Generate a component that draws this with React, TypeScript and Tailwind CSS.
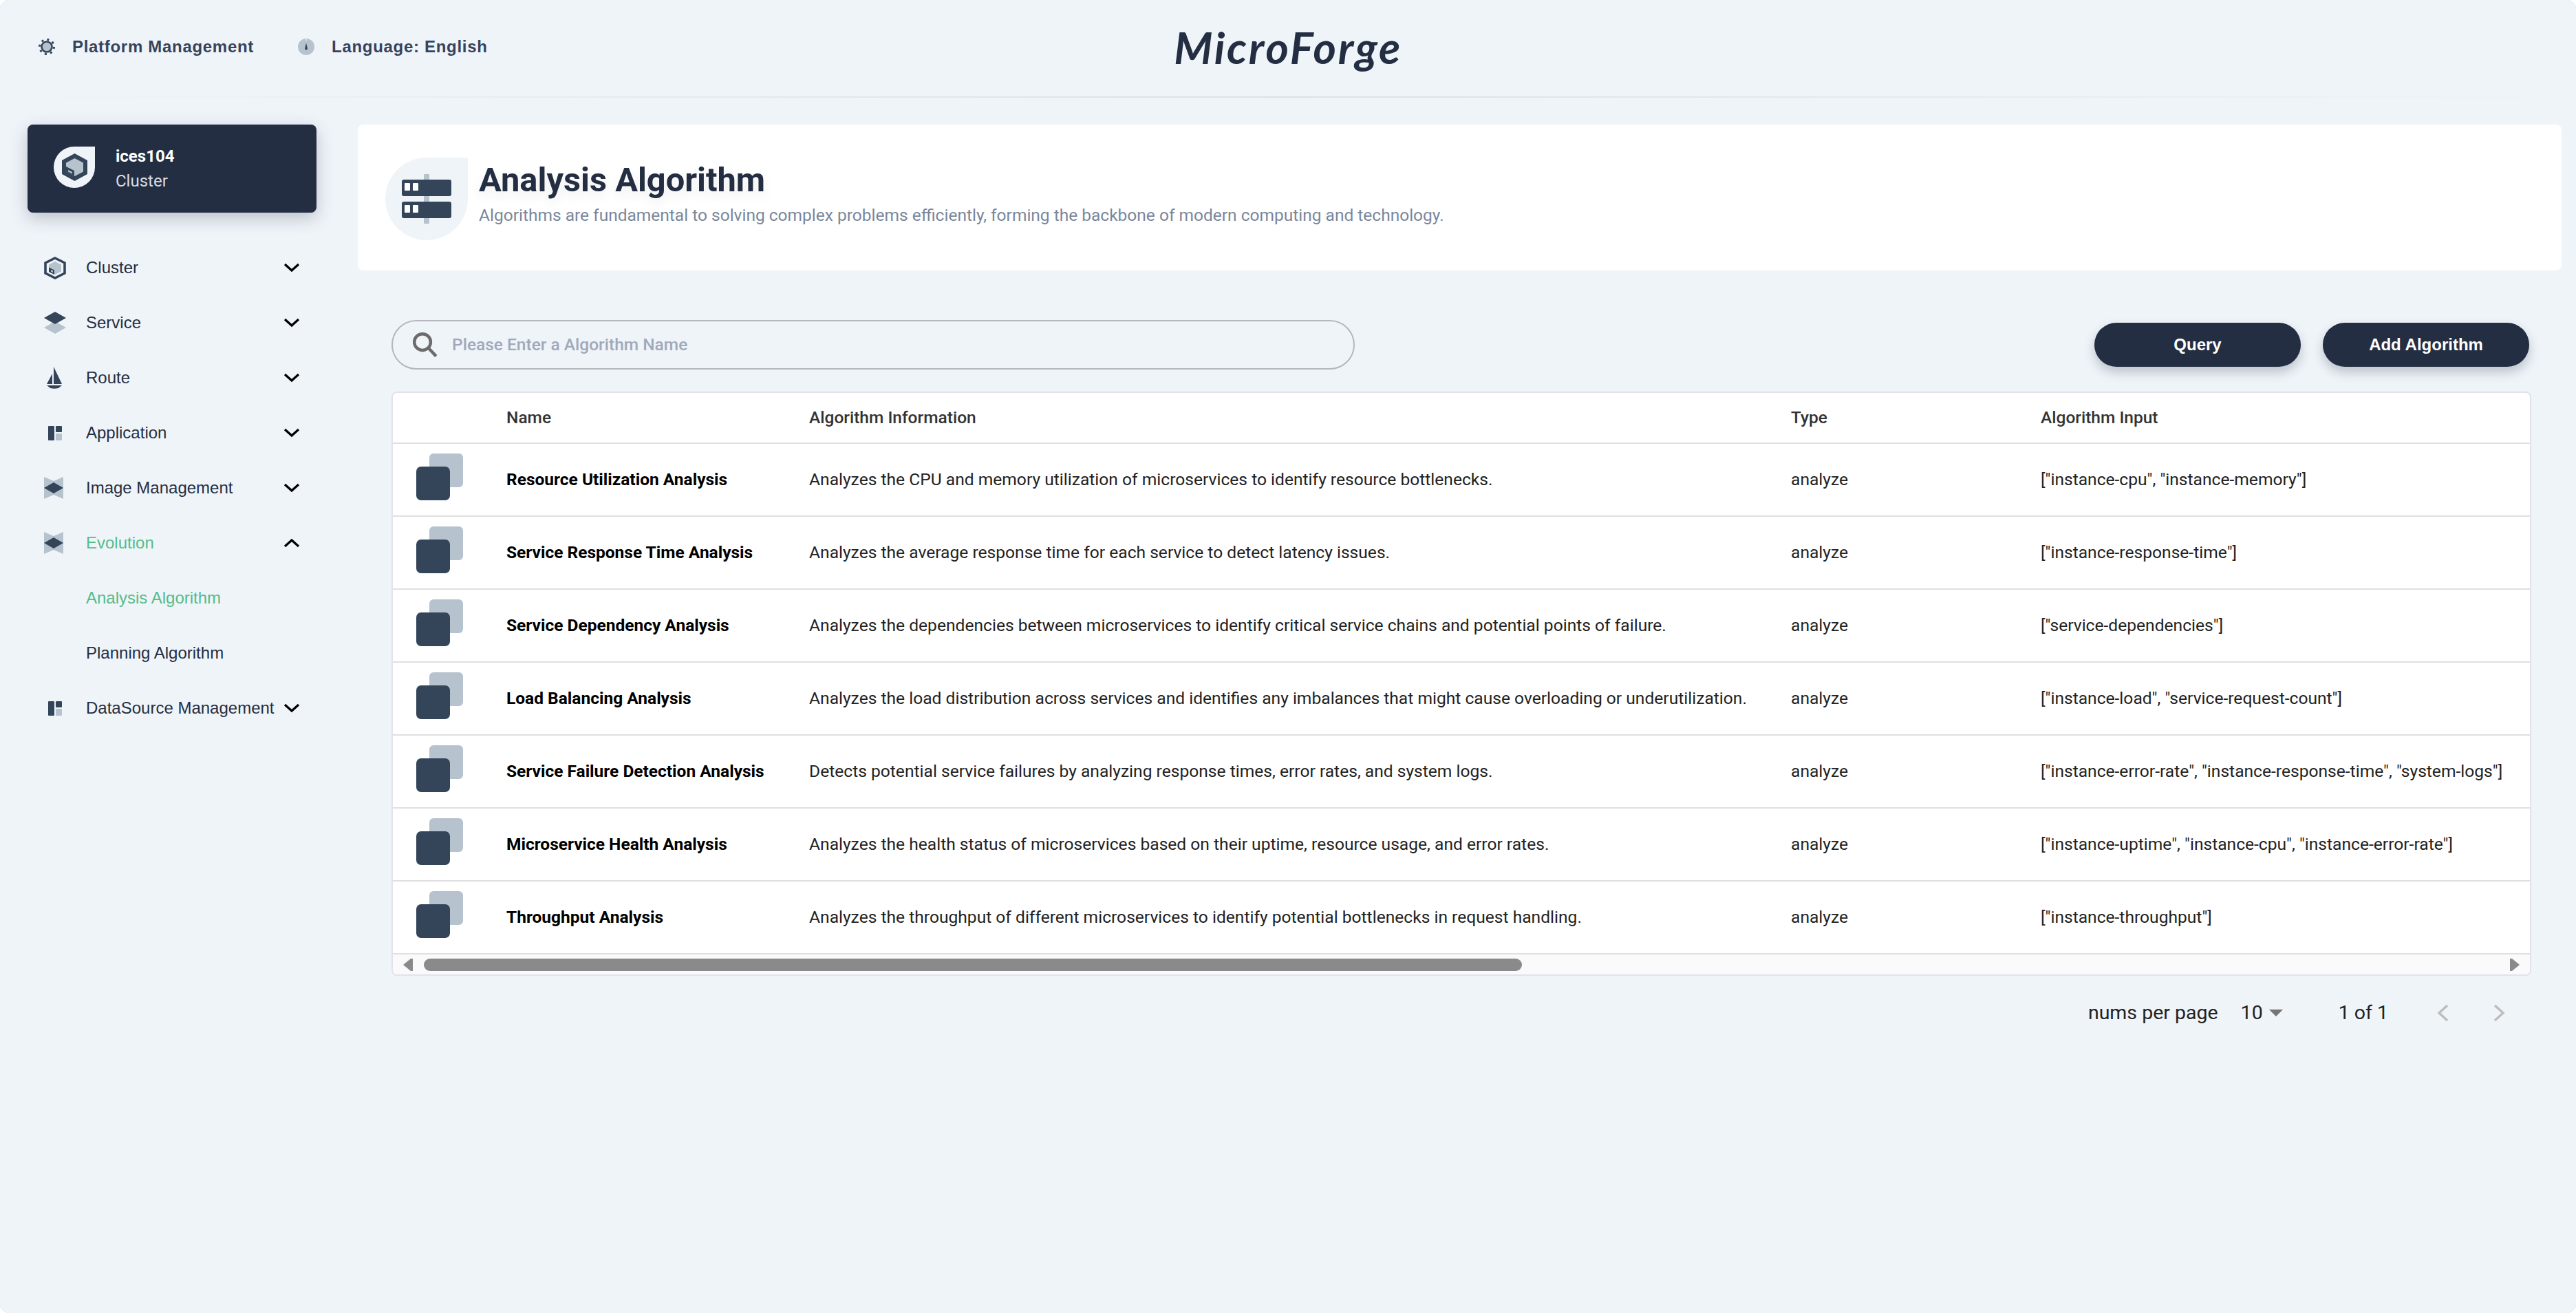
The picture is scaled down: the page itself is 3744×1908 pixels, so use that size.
import React from "react";

const rows = [
  ["Resource Utilization Analysis", "Analyzes the CPU and memory utilization of microservices to identify resource bottlenecks.", '["instance-cpu", "instance-memory"]'],
  ["Service Response Time Analysis", "Analyzes the average response time for each service to detect latency issues.", '["instance-response-time"]'],
  ["Service Dependency Analysis", "Analyzes the dependencies between microservices to identify critical service chains and potential points of failure.", '["service-dependencies"]'],
  ["Load Balancing Analysis", "Analyzes the load distribution across services and identifies any imbalances that might cause overloading or underutilization.", '["instance-load", "service-request-count"]'],
  ["Service Failure Detection Analysis", "Detects potential service failures by analyzing response times, error rates, and system logs.", '["instance-error-rate", "instance-response-time", "system-logs"]'],
  ["Microservice Health Analysis", "Analyzes the health status of microservices based on their uptime, resource usage, and error rates.", '["instance-uptime", "instance-cpu", "instance-error-rate"]'],
  ["Throughput Analysis", "Analyzes the throughput of different microservices to identify potential bottlenecks in request handling.", '["instance-throughput"]'],
];

const D = "#34455a";
const L = "#b6c2cd";

function Gear() {
  return (
    <svg width="24" height="24" viewBox="0 0 24 24">
      <circle cx="12" cy="12" r="10.5" fill="none" stroke={D} strokeWidth="3" strokeDasharray="3 5.25" />
      <circle cx="12" cy="12" r="7.5" fill={L} stroke={D} strokeWidth="2.6" />
    </svg>
  );
}
function Gauge() {
  return (
    <svg width="24" height="24" viewBox="0 0 24 24">
      <circle cx="12" cy="12" r="12" fill={L} />
      <path d="M12 2.2 A9.8 9.8 0 0 1 21.8 12 A9.8 9.8 0 0 0 12 2.2Z" fill="#eff4f9" />
      <path d="M12 0.5v3" stroke="#eff4f9" strokeWidth="1.2" />
      <path d="M12 6.5 L13.8 14 A1.9 1.9 0 1 1 10.2 14Z" fill={D} />
    </svg>
  );
}
function Hex({ w, h }: { w: number; h: number }) {
  return (
    <svg width={w} height={h} viewBox="0 0 32 33">
      <path d="M16 2 L30 9 V24 L16 31 L2 24 V9Z" fill="none" stroke={D} strokeWidth="3.6" strokeLinejoin="miter" />
      <path d="M16 7 L25 11.5 V21.5 L16 26 L7 21.5 V11.5Z" fill={L} />
      <path d="M7 15.5 L15 19.5 V26 L7 22Z" fill={D} />
      <path d="M10 19 L13 20.5 V23 L10 21.5Z" fill={L} />
    </svg>
  );
}
function CardHex() {
  return (
    <svg width="37" height="40" viewBox="0 0 37 40">
      <path d="M18.5 0 L37 10 V30 L18.5 40 L0 30 V10Z" fill={D} />
      <path d="M18.5 7 L31 13.5 V26.5 L18.5 33 L6 26.5 V13.5Z" fill={L} />
      <path d="M6 19 L18 25 V33 L6 26.5Z" fill={D} />
      <path d="M9 24 L15 27 V29.5 L9 26.5Z" fill={L} />
    </svg>
  );
}
function Layers() {
  return (
    <svg width="32" height="32" viewBox="0 0 32 32">
      <path d="M16 14 L32 23 L16 32 L0 23Z" fill={L} />
      <path d="M16 0 L32 9 L16 18 L0 9Z" fill={D} />
    </svg>
  );
}
function Boat() {
  return (
    <svg width="22" height="32" viewBox="0 0 22 32">
      <path d="M10 0 V25 L22 25Z" fill={D} />
      <path d="M8 10 V25 L0 25Z" fill={D} />
      <path d="M0 27 H22 L17 31 Q11 32.5 5 31Z" fill={D} />
    </svg>
  );
}
function Dash() {
  return (
    <svg width="20" height="21" viewBox="0 0 20 21">
      <rect width="9" height="21" rx="1" fill={D} />
      <rect x="11" width="9" height="9" rx="1" fill={D} />
      <rect x="11" y="11" width="9" height="10" rx="1" fill={L} />
    </svg>
  );
}
function Bow() {
  return (
    <svg width="28" height="32" viewBox="0 0 28 32">
      <path d="M0 0 L14 6 L28 0 V32 L14 26 L0 32Z" fill={L} />
      <path d="M14 8 L28 16 L14 24 L0 16Z" fill={D} />
    </svg>
  );
}
function Chevron({ up }: { up?: boolean }) {
  return (
    <svg width="24" height="16" viewBox="0 0 24 16" className="shrink-0">
      <path d={up ? "M2 13 L12 4 L22 13" : "M2 3 L12 12 L22 3"} fill="none" stroke="#000" strokeWidth="3.2" />
    </svg>
  );
}

const nav: { label: string; icon: React.ReactNode; active?: boolean; up?: boolean; sub?: boolean }[] = [
  { label: "Cluster", icon: <Hex w={32} h={33} /> },
  { label: "Service", icon: <Layers /> },
  { label: "Route", icon: <span className="ml-[4px]"><Boat /></span> },
  { label: "Application", icon: <span className="ml-[6px]"><Dash /></span> },
  { label: "Image Management", icon: <Bow /> },
  { label: "Evolution", icon: <Bow />, active: true, up: true },
  { label: "Analysis Algorithm", icon: null, active: true, sub: true },
  { label: "Planning Algorithm", icon: null, sub: true },
  { label: "DataSource Management", icon: <span className="ml-[6px]"><Dash /></span> },
];

export default function App() {
  return (
    <div className="w-[3744px] h-[1908px] overflow-hidden bg-white" style={{ fontFamily: "Roboto, sans-serif" }}>
      <div className="w-full h-full bg-[#eff4f9] rounded-[16px] shadow-[0_0_3px_rgba(0,0,0,0.2)] text-[#242e42]">
        <header className="relative h-[142px] grid grid-cols-[1fr_auto_1fr] items-center">
          <div className="flex items-center pl-[56px] pb-[6px] text-[#36435c] font-bold text-[24px] tracking-[0.7px]" style={{ fontFamily: '"Liberation Sans", sans-serif' }}>
            <Gear />
            <span className="ml-[25px]">Platform Management</span>
            <span className="ml-[64px]"><Gauge /></span>
            <span className="ml-[25px]">Language: English</span>
          </div>
          <div className="text-[64px] italic font-bold tracking-[2.7px] leading-none pb-[4px]" style={{ fontFamily: 'Lato, sans-serif' }}>MicroForge</div>
          <div />
          <div className="absolute left-0 right-0 bottom-0 h-[2px] bg-gradient-to-r from-[#eff4f9] via-[#dbe1e8] to-[#eff4f9]" />
        </header>

        <div className="flex pt-[39px]">
          <aside className="w-[520px] shrink-0 pl-[40px] pr-[60px]">
            <div className="h-[128px] rounded-[8px] bg-[#242e42] flex items-center pl-[38px] shadow-[0_8px_24px_rgba(36,46,66,0.25)]">
              <div className="w-[60px] h-[60px] bg-[#eff4f9] rounded-[50%] rounded-tr-none flex items-center justify-center mt-[-4px]">
                <CardHex />
              </div>
              <div className="ml-[30px]">
                <div className="text-white font-bold text-[24px] leading-[36px]">ices104</div>
                <div className="text-[#d8dee5] text-[24px] leading-[36px]">Cluster</div>
              </div>
            </div>
            <nav className="mt-[40px] -ml-[40px] mr-[24px]" style={{ fontFamily: '"Liberation Sans", sans-serif' }}>
              {nav.map((n) => (
                <div key={n.label} className="h-[80px] flex items-center pl-[64px] text-[24px]">
                  <div className="w-[61px] shrink-0 flex items-center justify-start">{n.icon}</div>
                  <span className={n.active ? "text-[#55bc8a]" : "text-[#242e42]"}>{n.label}</span>
                  {!n.sub && <span className="ml-auto"><Chevron up={n.up} /></span>}
                </div>
              ))}
            </nav>
          </aside>

          <main className="flex-1 mr-[21px]">
            <div className="h-[212px] bg-white rounded-[8px] flex items-start pl-[40px] pt-[48px]">
              <div className="w-[120px] h-[120px] bg-[#eff4f9] rounded-[50%] rounded-tr-none shrink-0 flex items-center justify-center">
                <svg width="72" height="72" viewBox="0 0 72 72">
                  <rect x="32" y="0" width="8" height="72" rx="1" fill={L} />
                  <rect y="8" width="72" height="24" rx="3" fill={D} />
                  <rect y="40" width="72" height="24" rx="3" fill={D} />
                  <rect x="4" y="13" width="8" height="11" rx="1" fill="#fff" />
                  <rect x="16" y="13" width="8" height="11" rx="1" fill="#fff" />
                  <rect x="4" y="45" width="8" height="11" rx="1" fill="#fff" />
                  <rect x="16" y="45" width="8" height="11" rx="1" fill="#fff" />
                </svg>
              </div>
              <div className="ml-[16px] mt-[1px]">
                <h1 className="text-[48.8px] leading-[64px] font-bold text-[#242e42] [text-shadow:0_8px_16px_rgba(36,46,66,0.08)]">Analysis Algorithm</h1>
                <p className="text-[24.5px] leading-[38px] text-[#79879c]">Algorithms are fundamental to solving complex problems efficiently, forming the backbone of modern computing and technology.</p>
              </div>
            </div>

            <div className="ml-[49px] w-[3110px]">
              <div className="mt-[72px] h-[72px] flex items-center">
                <div className="w-[1400px] h-[72px] rounded-full border-2 border-[#b4b8bd] flex items-center pl-[28px]">
                  <svg width="38" height="38" viewBox="0 0 24 24" fill="none" stroke="#6b6b6b" strokeWidth="2.8">
                    <circle cx="9.5" cy="9.5" r="7.5" />
                    <path d="M15 15 L22 22.5" />
                  </svg>
                  <span className="ml-[20px] pt-[1px] text-[24.5px] font-medium text-[#a1a9b9]">Please Enter a Algorithm Name</span>
                </div>
                <div className="ml-auto mr-[3px] flex gap-[32px] text-white font-bold text-[24px]" style={{ fontFamily: '"Liberation Sans", sans-serif' }}>
                  <button className="w-[300px] h-[64px] rounded-full bg-[#242e42] shadow-[0_8px_16px_rgba(36,46,66,0.25)]">Query</button>
                  <button className="w-[300px] h-[64px] rounded-full bg-[#242e42] shadow-[0_8px_16px_rgba(36,46,66,0.25)]">Add Algorithm</button>
                </div>
              </div>

              <div className="mt-[32px] border-2 border-[#e3e1ec] rounded-[8px] bg-white overflow-hidden">
                <div className="h-[74px] border-b-2 border-[#e0e0e0] grid grid-cols-[165px_440px_1427px_363px_1fr] items-center text-[24.5px] font-medium text-[#333]">
                  <div />
                  <div>Name</div>
                  <div>Algorithm Information</div>
                  <div>Type</div>
                  <div>Algorithm Input</div>
                </div>
                {rows.map((r) => (
                  <div key={r[0]} className="h-[106px] border-b-2 border-[#e0e0e0] grid grid-cols-[165px_440px_1427px_363px_1fr] items-center text-[24.6px] text-[#222]">
                    <div className="pl-[34px]">
                      <div className="relative w-[68px] h-[68px] mt-[-9px]">
                        <div className="absolute right-0 top-0 w-[49px] h-[49px] rounded-[6px] bg-[#b6c2cd]" />
                        <div className="absolute left-0 bottom-0 w-[49px] h-[49px] rounded-[7px] bg-[#34455a]" />
                      </div>
                    </div>
                    <div className="font-bold text-black text-[24.5px]">{r[0]}</div>
                    <div>{r[1]}</div>
                    <div>analyze</div>
                    <div className="whitespace-nowrap">{r[2]}</div>
                  </div>
                ))}
                <div className="h-[29px] bg-[#fafafa] flex items-center pl-[15px] pr-[15px]">
                  <svg width="14" height="18" viewBox="0 0 14 18"><path d="M14 0 V18 H11 L0 9 L11 0Z" fill="#8a8a8a" /></svg>
                  <div className="ml-[16px] w-[1596px] h-[18px] rounded-full bg-[#8a8a8a]" />
                  <svg className="ml-auto" width="14" height="18" viewBox="0 0 14 18"><path d="M0 0 V18 H3 L14 9 L3 0Z" fill="#8a8a8a" /></svg>
                </div>
              </div>

              <div className="h-[108px] flex items-center justify-end text-[28.5px] text-[#222] pr-[38px]">
                <span>nums per page</span>
                <span className="ml-[33px]">10</span>
                <svg className="ml-[9px]" width="20" height="10" viewBox="0 0 20 10"><path d="M0 0 H20 L10 10Z" fill="#757575" /></svg>
                <span className="ml-[81px]">1 of 1</span>
                <svg className="ml-[71px]" width="17" height="24" viewBox="0 0 17 24"><path d="M15 1 L3 12 L15 23" fill="none" stroke="#bdbdbd" strokeWidth="3.4" /></svg>
                <svg className="ml-[65px]" width="17" height="24" viewBox="0 0 17 24"><path d="M2 1 L14 12 L2 23" fill="none" stroke="#bdbdbd" strokeWidth="3.4" /></svg>
              </div>
            </div>
          </main>
        </div>
      </div>
    </div>
  );
}
